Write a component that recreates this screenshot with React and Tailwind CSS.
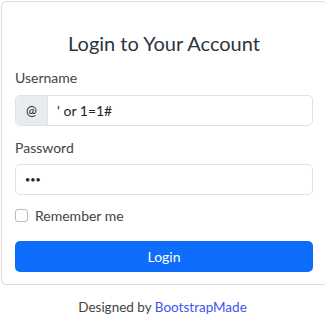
import React from 'react';

const App = () => {
  return (
    <div className="min-h-screen bg-white font-['Lato','Open_Sans',sans-serif] text-[#444444]">
      <div className="ml-[1px] mt-[1px] w-[326px] rounded-[5px] border border-[#dcdcdc] px-[13px] pt-[27px] pb-[12px]">
        <h5 className="text-center text-[20px] leading-[28px] text-[#2c3440]">Login to Your Account</h5>

        <label className="mt-[11px] block text-[14px] leading-[20px] text-[#444444]">Username</label>
        <div className="mt-[7px] flex h-[31px] rounded-[5px] border border-[#dee2e6]">
          <span className="flex w-[32px] items-center justify-center rounded-l-[5px] border-r border-[#dee2e6] bg-[#e9ecef] text-[13px] text-[#212529]">@</span>
          <div className="flex flex-1 items-center pl-[9px] text-[14px] text-[#212529]">' or 1=1#</div>
        </div>

        <label className="mt-[12px] block text-[14px] leading-[20px] text-[#444444]">Password</label>
        <div className="mt-[6px] flex h-[31px] items-center rounded-[5px] border border-[#dee2e6] pl-[9px] text-[9px] tracking-[0px] text-[#212529]">
          •••
        </div>

        <div className="mt-[10px] flex h-[20px] items-center gap-[7px]">
          <span className="h-[13px] w-[13px] rounded-[3px] border border-[#b8bcc0] bg-white" />
          <span className="text-[14px] text-[#444444]">Remember me</span>
        </div>

        <button className="mt-[16px] flex h-[31px] w-full items-center justify-center rounded-[5px] bg-[#0d6efd] text-[14px] text-white">
          Login
        </button>
      </div>

      <div className="mt-[12px] text-center text-[13.5px] leading-[20px] text-[#444444]">
        Designed by <span className="text-[#4154f1]">BootstrapMade</span>
      </div>
    </div>
  );
};

export default App;
